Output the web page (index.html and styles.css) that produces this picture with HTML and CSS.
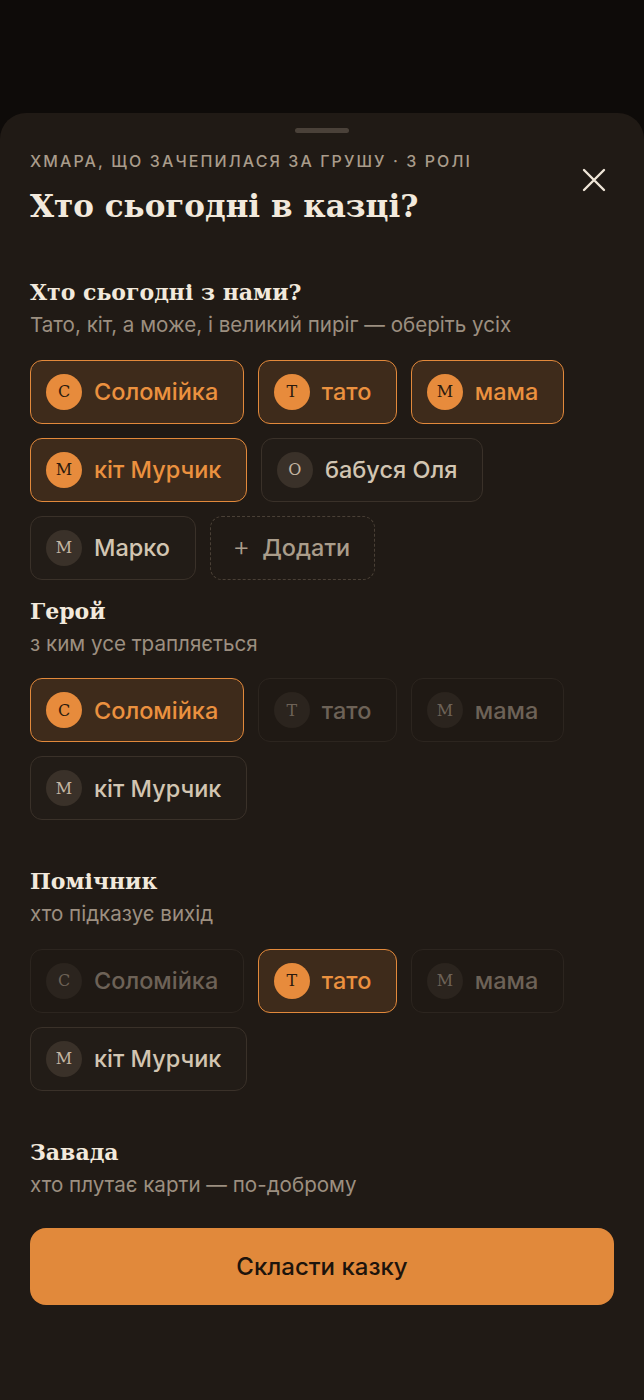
FILE: index.html
```html
<!DOCTYPE html>
<html lang="uk">

<head>
    <meta charset="utf-8">
    <title>Хто сьогодні в казці?</title>
    <link rel="stylesheet" href="styles.css">
</head>

<body>
    <div class="sheet">
        <div class="handle"></div>
        <button class="close" aria-label="Закрити">
            <svg width="24" height="24" viewBox="0 0 24 24">
                <path d="M2 2L22 22M22 2L2 22" stroke="#efe6d8" stroke-width="2.4" stroke-linecap="round" fill="none" />
            </svg>
        </button>

        <div class="eyebrow">Хмара, що зачепилася за грушу · 3 ролі</div>
        <h1 class="title">Хто сьогодні в казці?</h1>

        <!-- хто з нами -->
        <div class="section">
            <h3 class="sec-title">Хто сьогодні з нами?</h3>
            <div class="sec-sub">Тато, кіт, а може, і великий пиріг — оберіть усіх</div>
            <div class="chips">
                <div class="chip on"><span class="ava">с</span>Соломійка</div>
                <div class="chip on"><span class="ava">т</span>тато</div>
                <div class="chip on"><span class="ava">м</span>мама</div>
                <div class="chip on"><span class="ava">м</span>кіт Мурчик</div>
                <div class="chip"><span class="ava">о</span>бабуся Оля</div>
                <div class="chip"><span class="ava">м</span>Марко</div>
                <div class="chip add"><span class="plus">+</span>Додати</div>
            </div>
        </div>

        <!-- ролі -->
        <div class="section role">
            <h3 class="sec-title">Герой</h3>
            <div class="sec-sub">з ким усе трапляється</div>
            <div class="chips">
                <div class="chip on"><span class="ava">с</span>Соломійка</div>
                <div class="chip off"><span class="ava">т</span>тато</div>
                <div class="chip off"><span class="ava">м</span>мама</div>
                <div class="chip"><span class="ava">м</span>кіт Мурчик</div>
            </div>
        </div>

        <div class="section role">
            <h3 class="sec-title">Помічник</h3>
            <div class="sec-sub">хто підказує вихід</div>
            <div class="chips">
                <div class="chip off"><span class="ava">с</span>Соломійка</div>
                <div class="chip on"><span class="ava">т</span>тато</div>
                <div class="chip off"><span class="ava">м</span>мама</div>
                <div class="chip"><span class="ava">м</span>кіт Мурчик</div>
            </div>
        </div>

        <div class="section role last">
            <h3 class="sec-title">Завада</h3>
            <div class="sec-sub">хто плутає карти — по-доброму</div>
        </div>

        <button class="cta">Скласти казку</button>
    </div>
</body>

</html>
```

FILE: styles.css
```css
body {
    margin: 0;
    background: #0e0b09;
    font-family: "Inter", "Noto Sans", sans-serif;
    color: #efe6d8;
}

.sheet {
    position: relative;
    margin-top: 113px;
    min-height: 1287px;
    box-sizing: border-box;
    padding: 15px 30px 40px;
    background: #201a15;
    border-radius: 26px 26px 0 0;
}

.handle {
    width: 54px;
    height: 5px;
    margin: 0 auto;
    border-radius: 3px;
    background: #4a4139;
}

.close {
    position: absolute;
    top: 55px;
    right: 38px;
    width: 24px;
    height: 24px;
    padding: 0;
    border: none;
    background: none;
    cursor: pointer;
}

.close svg {
    display: block;
}

.eyebrow {
    margin-top: 18px;
    font-size: 16px;
    line-height: 20px;
    font-weight: 500;
    letter-spacing: 2.1px;
    text-transform: uppercase;
    color: #a99c8b;
}

.title {
    margin: 15px 0 0;
    font-family: "DejaVu Serif", serif;
    font-size: 31px;
    line-height: 40px;
    font-weight: bold;
    color: #f2e9dc;
}

.section {
    margin-top: 51px;
}

.section + .section {
    margin-top: 16px;
}

.role {
    padding-bottom: 30px;
}

.role.last {
    padding-bottom: 0;
}

.sec-title {
    margin: 0;
    font-family: "DejaVu Serif", serif;
    font-size: 22px;
    line-height: 30px;
    font-weight: bold;
    color: #f2e9dc;
}

.sec-sub {
    margin-top: 5px;
    font-size: 20.6px;
    line-height: 25px;
    color: #9c8f80;
}

.chips {
    display: flex;
    flex-wrap: wrap;
    gap: 14px 13.5px;
    margin-top: 22.5px;
}

.chip {
    display: flex;
    align-items: center;
    gap: 12px;
    height: 64px;
    box-sizing: border-box;
    padding: 0 25px 0 15px;
    border: 1.5px solid #3a3129;
    border-radius: 12px;
    background: #221c17;
    font-size: 23.5px;
    font-weight: 500;
    color: #d2c5b2;
}

.ava {
    display: flex;
    align-items: center;
    justify-content: center;
    width: 36px;
    height: 36px;
    border-radius: 50%;
    background: #3a3129;
    font-family: "DejaVu Serif", serif;
    font-size: 16px;
    font-weight: normal;
    color: #c4b6a3;
    text-transform: uppercase;
}

/* вибрано */
.chip.on {
    border-color: #e2893b;
    background: #3e2b1b;
    color: #eb913f;
}

.chip.on .ava {
    background: #e78b3c;
    color: #2a1a0d;
}

/* зайнято іншою роллю */
.chip.off {
    border-color: #2c251f;
    background: #1f1914;
    color: #6d6257;
}

.chip.off .ava {
    background: #2b241e;
    color: #6d6257;
}

.chip.add {
    border: 1.5px dashed #4a4036;
    background: none;
    color: #aa9d8b;
    padding: 0 24px 0 22px;
}

.plus {
    font-size: 27px;
    font-weight: 300;
    line-height: 1;
    margin-top: -3px;
}

.cta {
    display: block;
    width: 100%;
    height: 77px;
    margin-top: 31px;
    border: none;
    border-radius: 16px;
    background: #e1893b;
    font-family: "Inter", "Noto Sans", sans-serif;
    font-size: 24px;
    font-weight: 500;
    color: #1d140c;
    cursor: pointer;
}
```
